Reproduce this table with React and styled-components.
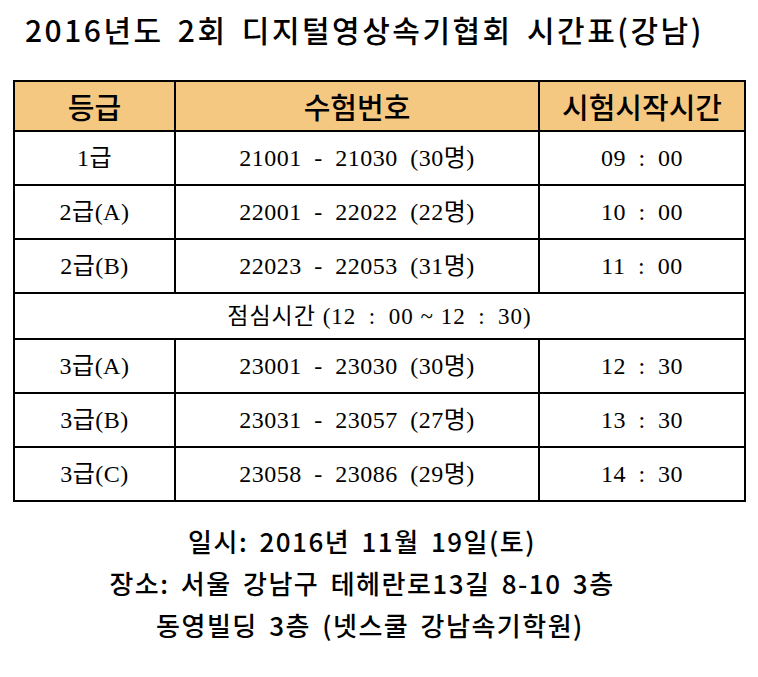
import React from 'react';
import styled, { createGlobalStyle } from 'styled-components';

const GlobalStyle = createGlobalStyle`
  body {
    margin: 0;
    background: #fff;
    color: #000;
  }
`;

const rows = [
  { grade: '1급', range: ['21001', '21030', '30'], time: ['09', '00'] },
  { grade: '2급(A)', range: ['22001', '22022', '22'], time: ['10', '00'] },
  { grade: '2급(B)', range: ['22023', '22053', '31'], time: ['11', '00'] },
  { lunch: true },
  { grade: '3급(A)', range: ['23001', '23030', '30'], time: ['12', '30'] },
  { grade: '3급(B)', range: ['23031', '23057', '27'], time: ['13', '30'] },
  { grade: '3급(C)', range: ['23058', '23086', '29'], time: ['14', '30'] },
];

const SP = '\u2002';

function App() {
  return (
    <Page>
      <GlobalStyle />
      <Title>2016년도 2회 디지털영상속기협회 시간표(강남)</Title>
      <Table>
        <colgroup>
          <col style={{ width: 161 }} />
          <col style={{ width: 364 }} />
          <col />
        </colgroup>
        <thead>
          <tr>
            <HeadCell>등급</HeadCell>
            <HeadCell>수험번호</HeadCell>
            <HeadCell>시험시작시간</HeadCell>
          </tr>
        </thead>
        <tbody>
          {rows.map((r, i) =>
            r.lunch ? (
              <Row key={i} short>
                <Cell colSpan={3} lunch>
                  점심시간 (12{SP}:{SP}00 ~ 12{SP}:{SP}30)
                </Cell>
              </Row>
            ) : (
              <Row key={i}>
                <Cell>{r.grade}</Cell>
                <Cell>
                  {r.range[0]}
                  {SP}-{SP}
                  {r.range[1]}
                  {SP}({r.range[2]}명)
                </Cell>
                <Cell>
                  {r.time[0]}
                  {SP}:{SP}
                  {r.time[1]}
                </Cell>
              </Row>
            )
          )}
        </tbody>
      </Table>
      <Footer>
        <FooterLine shift={34}>일시: 2016년 11월 19일(토)</FooterLine>
        <FooterLine shift={34}>장소: 서울 강남구 테헤란로13길 8-10 3층</FooterLine>
        <FooterLine shift={18}>동영빌딩 3층 (넷스쿨 강남속기학원)</FooterLine>
      </Footer>
    </Page>
  );
}

const Page = styled.div`
  width: 758px;
  height: 677px;
  padding-top: 11px;
  box-sizing: border-box;
`;

const Title = styled.h1`
  margin: 0 0 33px 25px;
  font-family: 'Noto Sans CJK KR', sans-serif;
  font-size: 30px;
  font-weight: 500;
  line-height: 36px;
  letter-spacing: 2.5px;
  word-spacing: 5px;
  white-space: nowrap;
`;

const Table = styled.table`
  margin-left: 13px;
  width: 733px;
  border-collapse: collapse;
  table-layout: fixed;
  td,
  th {
    border: 2px solid #000;
    padding: 0;
    text-align: center;
    vertical-align: middle;
  }
`;

const HeadCell = styled.th`
  height: 48px;
  background: #f5c882;
  font-family: 'Noto Sans CJK KR', sans-serif;
  font-size: 29px;
  font-weight: 500;
  line-height: 1;
`;

const Row = styled.tr`
  height: ${(p) => (p.short ? '46px' : '54px')};
`;

const Cell = styled.td`
  font-family: 'Liberation Serif', 'Noto Sans CJK KR', serif;
  font-size: ${(p) => (p.lunch ? '23px' : '24px')};
  letter-spacing: ${(p) => (p.lunch ? '1px' : '0.5px')};
  line-height: 1;
  white-space: nowrap;
`;

const Footer = styled.div`
  margin-top: 18px;
  font-family: 'Noto Sans CJK KR', sans-serif;
  font-size: 26px;
  font-weight: 500;
  line-height: 42px;
  letter-spacing: 1.5px;
  word-spacing: 4px;
`;

const FooterLine = styled.div`
  text-align: center;
  white-space: nowrap;
  padding-right: ${(p) => p.shift}px;
`;

export default App;
